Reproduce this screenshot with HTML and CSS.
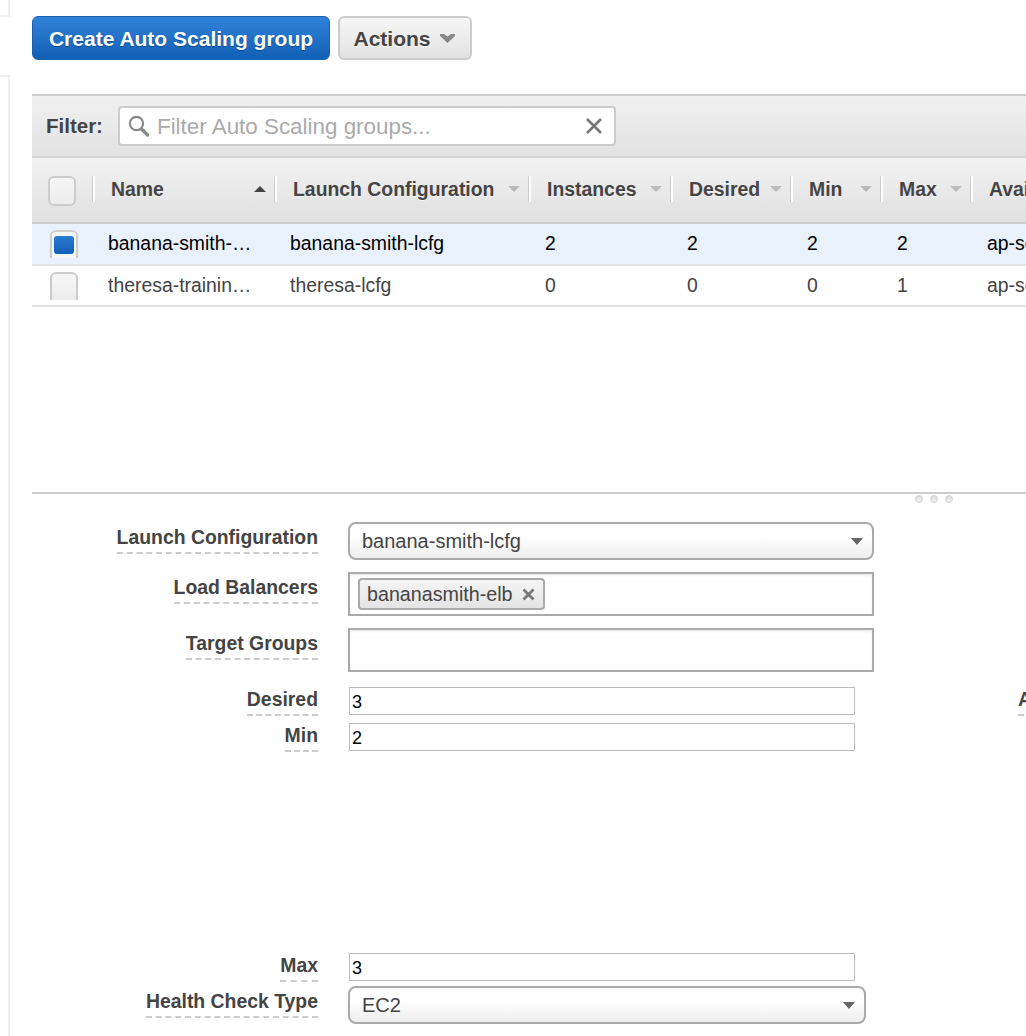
FILE: index.html
```html
<!DOCTYPE html>
<html lang="en">
<head>
<meta charset="utf-8">
<title>Auto Scaling Groups</title>
<link rel="stylesheet" href="styles.css">
</head>
<body>
<div class="page">
  <aside class="rail">
    <div class="rail-top"></div>
    <div class="rail-main"></div>
  </aside>
  <main class="main">
    <div class="toolbar">
      <button class="btn btn-primary">Create Auto Scaling group</button>
      <button class="btn btn-default">Actions
        <svg class="chev" width="15" height="9" viewBox="0 0 15 9"><path d="M0 0 L4 0 L7.5 2.5 L11 0 L15 0 L15 2 L7.5 9 L0 2 Z" fill="#888"/></svg>
      </button>
    </div>

    <section class="grid-panel">
      <div class="filterbar">
        <span class="filter-label">Filter:</span>
        <div class="filter-box">
          <svg class="search" width="22" height="22" viewBox="0 0 22 22"><circle cx="8.5" cy="8.5" r="6.6" fill="none" stroke="#888" stroke-width="2.2"/><path d="M13.5 14 L19.5 20" stroke="#888" stroke-width="3.2" stroke-linecap="round"/></svg>
          <input class="filter-input" placeholder="Filter Auto Scaling groups...">
          <svg class="clear" width="18" height="18" viewBox="0 0 18 18"><path d="M2 2 L16 16 M16 2 L2 16" stroke="#777" stroke-width="2.6"/></svg>
        </div>
      </div>

      <div class="cols head">
        <div class="hcell hcheck"><span class="check check-head"></span></div>
        <div class="hcell">Name<svg class="sort" width="12" height="6" viewBox="0 0 12 6"><path d="M6 0 L12 6 L0 6 Z" fill="#444"/></svg></div>
        <div class="hcell">Launch Configuration<svg class="sort" width="12" height="6" viewBox="0 0 12 6"><path d="M0 0 L12 0 L6 6 Z" fill="#bbb"/></svg></div>
        <div class="hcell">Instances<svg class="sort" width="12" height="6" viewBox="0 0 12 6"><path d="M0 0 L12 0 L6 6 Z" fill="#bbb"/></svg></div>
        <div class="hcell">Desired<svg class="sort" width="12" height="6" viewBox="0 0 12 6"><path d="M0 0 L12 0 L6 6 Z" fill="#bbb"/></svg></div>
        <div class="hcell">Min<svg class="sort" width="12" height="6" viewBox="0 0 12 6"><path d="M0 0 L12 0 L6 6 Z" fill="#bbb"/></svg></div>
        <div class="hcell">Max<svg class="sort" width="12" height="6" viewBox="0 0 12 6"><path d="M0 0 L12 0 L6 6 Z" fill="#bbb"/></svg></div>
        <div class="hcell">Availability Zones</div>
      </div>

      <div class="cols row row-selected">
        <div class="cell cell-check"><span class="check-clip"><span class="check check-on"><span class="check-fill"></span></span></span></div>
        <div class="cell cell-ellipsis">banana-smith-asg</div>
        <div class="cell">banana-smith-lcfg</div>
        <div class="cell cell-num">2</div>
        <div class="cell cell-num">2</div>
        <div class="cell cell-num">2</div>
        <div class="cell cell-num">2</div>
        <div class="cell cell-num">ap-southeast-2a</div>
      </div>
      <div class="cols row">
        <div class="cell cell-check"><span class="check-clip"><span class="check"></span></span></div>
        <div class="cell cell-ellipsis">theresa-training-asg</div>
        <div class="cell">theresa-lcfg</div>
        <div class="cell cell-num">0</div>
        <div class="cell cell-num">0</div>
        <div class="cell cell-num">0</div>
        <div class="cell cell-num">1</div>
        <div class="cell cell-num">ap-southeast-2a</div>
      </div>
    </section>

    <div class="splitter">
      <div class="dots"><i></i><i></i><i></i></div>
    </div>

    <form class="form">
      <div class="frow frow-lc">
        <label class="flabel flabel-tall"><span>Launch Configuration</span></label>
        <div class="select select-wide">banana-smith-lcfg<svg class="caret" width="12" height="7" viewBox="0 0 12 7"><path d="M0 0 L12 0 L6 7 Z" fill="#666"/></svg></div>
      </div>
      <div class="frow frow-lb">
        <label class="flabel flabel-tall"><span>Load Balancers</span></label>
        <div class="tagbox"><span class="tag">bananasmith-elb<svg class="tag-x" width="13" height="13" viewBox="0 0 13 13"><path d="M1.5 1.5 L11.5 11.5 M11.5 1.5 L1.5 11.5" stroke="#777" stroke-width="2.8"/></svg></span></div>
      </div>
      <div class="frow frow-tg">
        <label class="flabel flabel-tall"><span>Target Groups</span></label>
        <div class="tagbox"></div>
      </div>
      <div class="frow frow-des">
        <label class="flabel"><span>Desired</span></label>
        <input class="num" value="3">
        <label class="flabel-side"><span>Availability Zones</span></label>
      </div>
      <div class="frow frow-min">
        <label class="flabel"><span>Min</span></label>
        <input class="num" value="2">
      </div>
      <div class="frow frow-max">
        <label class="flabel"><span>Max</span></label>
        <input class="num" value="3">
      </div>
      <div class="frow frow-hc">
        <label class="flabel flabel-tall"><span>Health Check Type</span></label>
        <div class="select select-narrow">EC2<svg class="caret" width="12" height="7" viewBox="0 0 12 7"><path d="M0 0 L12 0 L6 7 Z" fill="#666"/></svg></div>
      </div>
    </form>
  </main>
</div>
</body>
</html>
```

FILE: styles.css
```css
* { box-sizing: border-box; }
html, body { margin: 0; padding: 0; background: #fff; }
body {
  width: 1026px;
  height: 1036px;
  overflow: hidden;
  font-family: "Liberation Sans", Arial, sans-serif;
  color: #444;
}
.page { display: flex; width: 1026px; height: 1036px; }

.rail { width: 10px; flex: none; display: flex; flex-direction: column; gap: 58px; }
.rail-top { height: 17px; border-right: 2px solid #eee; border-bottom: 2px solid #eee; }
.rail-main { flex: 1; border-right: 2px solid #eee; border-top: 2px solid #eee; }

.main { width: 1016px; flex: none; padding: 16px 0 0 22px; overflow: hidden; }

.toolbar { display: flex; gap: 8px; height: 44px; }
.btn {
  height: 44px;
  border-radius: 6px;
  font-family: inherit;
  font-size: 21px;
  font-weight: bold;
  padding: 1px 0 0;
}
.btn-primary {
  width: 298px;
  color: #fff;
  border: 1px solid #1a5fae;
  background: linear-gradient(#3083d8, #1260b6);
  text-shadow: 0 1px 1px #0d4a90;
}
.btn-default {
  width: 134px;
  color: #444;
  border: 2px solid #ccc;
  background: linear-gradient(#f6f6f6, #e2e2e2);
  text-shadow: 0 1px 0 #fff;
  display: flex;
  align-items: center;
  justify-content: center;
  gap: 9px;
  padding-right: 2px;
}

.grid-panel { margin-top: 34px; width: 1120px; height: 398px; }
.filterbar {
  height: 64px;
  border-top: 2px solid #ccc;
  border-bottom: 2px solid #d4d4d4;
  background: linear-gradient(#f0f0f0, #e2e2e2);
  display: flex;
  align-items: center;
  padding-left: 14px;
  gap: 15px;
}
.filter-label { font-size: 20.5px; font-weight: bold; color: #444; }
.filter-box {
  width: 498px;
  height: 40px;
  border: 2px solid #ccc;
  border-radius: 4px;
  background: #fff;
  display: flex;
  align-items: center;
  padding: 0 11px 0 8px;
  gap: 7px;
}
.filter-input {
  flex: 1;
  min-width: 0;
  border: 0;
  outline: 0;
  padding: 2px 0 0;
  font-family: inherit;
  font-size: 22.4px;
  background: transparent;
}
.filter-input::placeholder { color: #aaa; opacity: 1; }

.cols { display: grid; grid-template-columns: 62px 182px 254px 142px 120px 90px 90px 180px; }
.head {
  height: 66px;
  background: linear-gradient(#f2f2f2, #e0e0e0);
  border-bottom: 2px solid #ccc;
  padding-top: 18px;
}
.hcell {
  height: 26px;
  position: relative;
  display: flex;
  align-items: center;
  justify-content: space-between;
  font-size: 19.4px;
  font-weight: bold;
  color: #444;
  padding: 0 10px 0 17px;
  white-space: nowrap;
  text-shadow: 0 1px 0 rgba(255, 255, 255, 0.6);
}
.hcell::after {
  content: "";
  position: absolute;
  top: 0;
  bottom: 0;
  right: -1px;
  width: 2px;
  background: #fff;
  box-shadow: -1px 0 0 #ccc;
}
.hcell:last-child::after { display: none; }
.hcheck { padding: 0 0 0 16px; align-items: flex-start; }

.row { height: 41px; border-bottom: 2px solid #e2e2e2; font-size: 19.4px; color: #444; overflow: hidden; }
.row-selected { height: 42px; background: #e9f1fd; color: #000; }
.cell { padding: 0 8px 0 14px; line-height: 38px; white-space: nowrap; overflow: hidden; }
.cell-num { padding-left: 15px; }
.cell-ellipsis { text-overflow: ellipsis; padding-right: 23px; }
.cell-check { padding: 6px 0 0 18px; line-height: 0; }
.check-clip { display: block; width: 28px; height: 28px; overflow: hidden; }

.check {
  display: block;
  width: 28px;
  height: 32px;
  border: 2px solid #ccc;
  border-radius: 6px;
  background: linear-gradient(#f6f6f6, #ececec);
}
.check-head { height: 30px; }
.check-on { background: #f3f6fb; padding: 4px 2px; }
.check-fill { display: block; width: 20px; height: 18px; border-radius: 3px; background: linear-gradient(#2a7ad2, #1260b6); }

.splitter { width: 1004px; height: 2px; background: #ccc; position: relative; }
.dots { position: absolute; left: 883px; top: 3px; display: flex; gap: 7px; }
.dots i {
  display: block;
  width: 8px;
  height: 8px;
  border-radius: 50%;
  background: radial-gradient(circle at 50% 70%, #f4f4f4, #d0d0d0);
  border: 1px solid #d4d4d4;
}

.form { display: block; margin-top: 28px; }
.frow { display: flex; }
.flabel { width: 286px; flex: none; margin-right: 30px; text-align: right; font-size: 19.4px; font-weight: bold; color: #444; }
.flabel-tall { padding-top: 3px; }
.flabel span, .flabel-side span {
  display: inline-block;
  border-bottom: 2px dashed #ccc;
  padding-bottom: 3px;
  line-height: 24px;
}
.flabel-side { margin-left: 163px; font-size: 19.4px; font-weight: bold; white-space: nowrap; color: #444; }

.select {
  height: 38px;
  border: 2px solid #aaa;
  border-radius: 8px;
  background: linear-gradient(#fff, #fff 35%, #eee);
  font-size: 20px;
  color: #444;
  display: flex;
  align-items: center;
  justify-content: space-between;
  padding: 0 9px 0 12px;
}
.select-wide { width: 526px; }
.select-narrow { width: 518px; }
.frow-lc { height: 38px; }
.frow-lb { margin-top: 12px; height: 44px; }
.frow-tg { margin-top: 12px; height: 44px; }
.tagbox {
  width: 526px;
  height: 44px;
  border: 2px solid #aaa;
  background: #fff;
  box-shadow: inset 0 2px 2px #eee;
  padding: 4px 8px;
}
.tag {
  display: inline-flex;
  align-items: center;
  height: 32px;
  border: 2px solid #aaa;
  border-radius: 4px;
  background: linear-gradient(#f4f4f4, #e4e4e4);
  font-size: 19.7px;
  color: #444;
  padding: 0 8px 0 7px;
  gap: 9px;
}
.num {
  width: 506px;
  height: 28px;
  margin-left: 1px;
  border: 1px solid #bbb;
  padding: 2px 2px 0;
  font-family: inherit;
  font-size: 18px;
  color: #000;
  background: #fff;
  border-radius: 0;
  outline: 0;
  flex: none;
}
.frow-des { margin-top: 15px; height: 28px; }
.frow-min { margin-top: 8px; height: 28px; }
.frow-max { margin-top: 202px; height: 28px; }
.frow-hc { margin-top: 5px; }
```
